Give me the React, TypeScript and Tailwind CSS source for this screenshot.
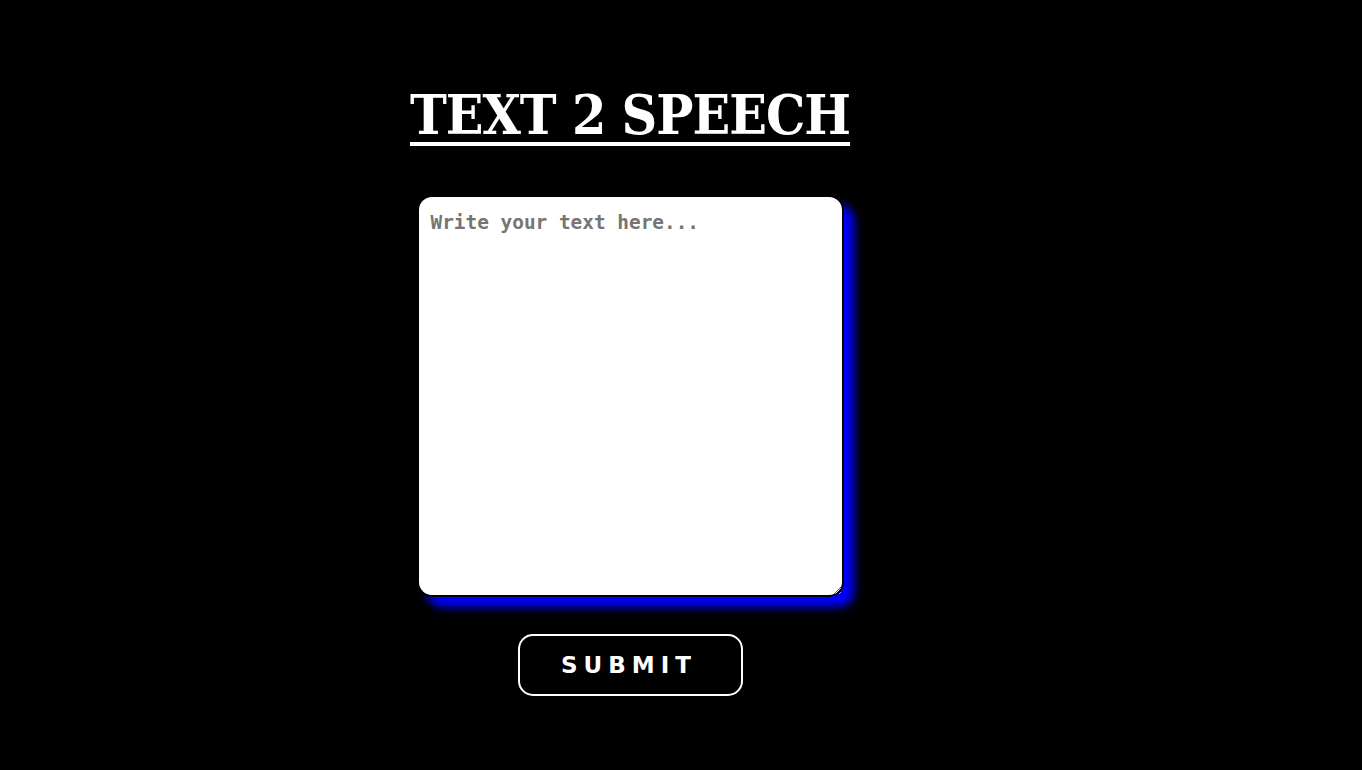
import React, { useState } from 'react';

export default function App() {
  const [text, setText] = useState('');

  return (
    <div className="min-h-[770px] w-full bg-black">
      <div className="w-[1260px] flex flex-col items-center pt-[77px]">
        <h1 className="text-white font-bold text-[55px] leading-[76px] underline decoration-[4px] underline-offset-[8px] font-['DejaVu_Serif_Condensed','DejaVu_Serif',serif] tracking-[-1px]">
          TEXT 2 SPEECH
        </h1>

        <textarea
          value={text}
          onChange={(e) => setText(e.target.value)}
          placeholder="Write your text here..."
          className="mt-[42px] w-[427px] h-[402px] bg-white rounded-[15px] border-2 border-black px-[12px] pt-[11px] pb-[10px] text-[19.4px] font-bold font-['DejaVu_Sans_Mono',monospace] placeholder:text-[#757575] shadow-[10px_10px_10px_blue] outline-none"
        />

        <button className="mt-[37px] w-[225px] h-[62px] rounded-[15px] border-2 border-white bg-black text-white text-[23px] font-bold tracking-[6px] pl-0 pr-[2px] font-['DejaVu_Sans',sans-serif]">
          SUBMIT
        </button>
      </div>
    </div>
  );
}
